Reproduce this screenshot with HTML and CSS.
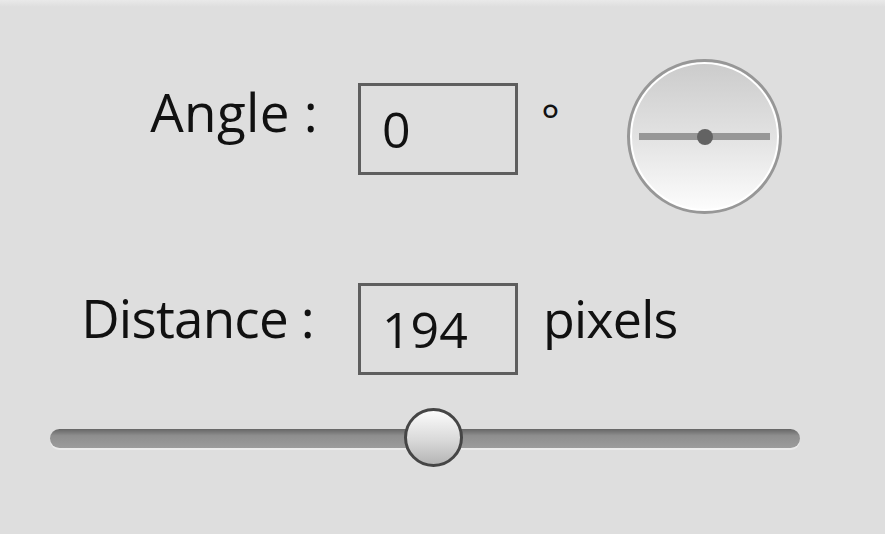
FILE: index.html
```html
<!DOCTYPE html>
<html>
<head>
<meta charset="utf-8">
<link rel="stylesheet" href="styles.css">
</head>
<body>
<div class="panel">
  <div class="row row-angle">
    <div class="label label-angle">Angle :</div>
    <div class="field">0</div>
    <div class="unit unit-deg">°</div>
    <div class="dial">
      <div class="dial-line"></div>
      <div class="dial-dot"></div>
    </div>
  </div>
  <div class="row row-distance">
    <div class="label label-distance">Distance :</div>
    <div class="field">194</div>
    <div class="unit unit-px">pixels</div>
  </div>
  <div class="slider">
    <div class="track"></div>
    <div class="thumb"></div>
  </div>
</div>
</body>
</html>
```
FILE: styles.css
```css
html, body {
  margin: 0;
  padding: 0;
}
body {
  width: 885px;
  height: 534px;
  overflow: hidden;
  background: linear-gradient(#e9e9e9 0, #dedede 7px, #dedede 100%);
  font-family: "Open Sans", "Noto Sans", sans-serif;
  color: #111;
}
.panel {
  padding-top: 59px;
}
.row {
  display: flex;
  align-items: flex-start;
}
.label {
  font-size: 53px;
  line-height: 52px;
  text-align: right;
  white-space: nowrap;
}
.label-angle {
  width: 318px;
  margin-top: 27px;
  letter-spacing: 0.3px;
}
.label-distance {
  width: 314px;
  margin-right: 4px;
  margin-top: 9px;
  letter-spacing: -0.8px;
}
.field {
  box-sizing: border-box;
  width: 160px;
  height: 92px;
  margin-left: 40px;
  border: 3px solid #5e5e5e;
  padding-top: 18px;
  padding-left: 21px;
  font-size: 50px;
  line-height: 50px;
}
.row-angle .field {
  margin-top: 24px;
}
.unit {
  font-size: 52px;
  line-height: 52px;
}
.unit-deg {
  width: 86px;
  margin-left: 23px;
  margin-top: 38px;
  font-size: 44px;
  line-height: 44px;
}
.unit-px {
  margin-left: 25px;
  margin-top: 9px;
  letter-spacing: -0.8px;
}
.dial {
  position: relative;
  box-sizing: border-box;
  width: 155px;
  height: 155px;
  border-radius: 50%;
  border: 3px solid #979797;
  box-shadow: inset 0 0 0 2px #ffffff;
  background: linear-gradient(#cbcbcb 0%, #e2e2e2 50%, #fdfdfd 100%);
  display: flex;
  align-items: center;
  justify-content: center;
}
.dial-line {
  width: 131px;
  height: 7px;
  background: #979797;
}
.dial-dot {
  position: absolute;
  left: 50%;
  top: 50%;
  width: 16px;
  height: 16px;
  margin-left: -8px;
  margin-top: -8px;
  border-radius: 50%;
  background: #636363;
}
.row-distance {
  margin-top: 69px;
}
.slider {
  position: relative;
  width: 750px;
  height: 60px;
  margin-left: 50px;
  margin-top: 33px;
  display: flex;
  align-items: center;
}
.track {
  width: 100%;
  height: 19px;
  border-radius: 10px;
  background: linear-gradient(#666666 0%, #8e8e8e 35%, #9c9c9c 100%);
  box-shadow: 0 2px 0 #ebebeb;
}
.thumb {
  position: absolute;
  left: 354px;
  top: 0;
  box-sizing: border-box;
  width: 59px;
  height: 59px;
  border-radius: 50%;
  border: 3px solid #454545;
  background: linear-gradient(#fbfbfb 0%, #d9d9d9 55%, #b5b5b5 100%);
}
```
